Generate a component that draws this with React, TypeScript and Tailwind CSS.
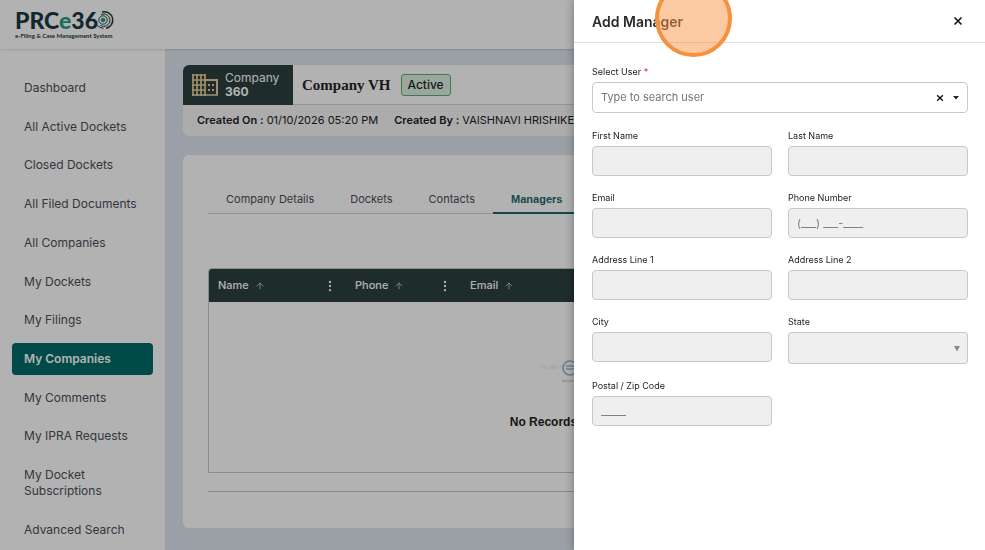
import React, { useState } from 'react';
import { clsx } from 'clsx';
import { ArrowUp, MoreVertical } from 'lucide-react';

const NAV_ITEMS = [
  'Dashboard',
  'All Active Dockets',
  'Closed Dockets',
  'All Filed Documents',
  'All Companies',
  'My Dockets',
  'My Filings',
  'My Companies',
  'My Comments',
  'My IPRA Requests',
  'My Docket Subscriptions',
  'Advanced Search',
];

const TABS = ['Company Details', 'Dockets', 'Contacts', 'Managers'];

function Logo() {
  return (
    <svg width="104" height="48" viewBox="0 0 104 48" role="img" aria-label="PRCe360">
      <text x="0" y="28" fontFamily="Lato, sans-serif" fontWeight="900" fontSize="23" fill="#1c3a42">
        PRC<tspan fill="#2a9d83">e</tspan>36
      </text>
      <g fill="none" stroke="#1c3a42">
        <path d="M87 11A8.400 8.400 0 1 1 91 27.300" strokeWidth="1.500" />
        <path d="M86 13.600A6.200 6.200 0 1 1 85.500 24.500" strokeWidth="1" />
        <circle cx="88" cy="19" r="4.200" strokeWidth="0.900" />
        <path d="M82.500 24.500A8.400 8.400 0 0 0 88.500 27.300" strokeWidth="1" />
      </g>
      <circle cx="88" cy="19" r="2.300" fill="#2a9d83" />
      <text x="0" y="37" fontFamily="Lato, sans-serif" fontWeight="700" fontSize="6" fill="#1c3a42">
        e-Filing &amp; Case Management System
      </text>
    </svg>
  );
}

function BuildingIcon() {
  return (
    <svg width="28" height="24" viewBox="0 0 28 24" fill="none" stroke="#e6cd98" strokeWidth="2" aria-hidden="true">
      <path d="M2 1v22M6 1v22M10 1v22M14 1v22M1 2h14M1 7h14M1 12h14M1 17h14M1 22h26" strokeWidth="1.700" />
      <path d="M14 7h12v15" />
      <path d="M17 12h2M21 12h2M17 17h2M21 17h2" />
    </svg>
  );
}

function EmptyIllustration() {
  return (
    <svg width="72" height="28" viewBox="0 0 72 28" fill="none" aria-hidden="true">
      <path d="M2 11h5M10 11h4M16 9v5M20 11h6" stroke="#f3f4f5" strokeWidth="4" />
      <circle cx="31" cy="12" r="7" stroke="#9fb0c4" strokeWidth="1.500" />
      <path d="M27 10h8M27 13h8" stroke="#b8cbe0" strokeWidth="2" />
      <path d="M23 25h34" stroke="#b5bfcb" strokeWidth="1" />
    </svg>
  );
}

function Sidebar() {
  return (
    <nav className="flex w-[165px] shrink-0 flex-col justify-between bg-white px-3 pt-[23px] pb-1">
      {NAV_ITEMS.map((item) => (
        <a
          key={item}
          href="#"
          className={clsx(
            'rounded px-3 py-2 text-[12px] leading-4',
            item === 'My Companies' ? 'bg-[#006b68] font-semibold text-white' : 'text-[#4b4f58]'
          )}
        >
          {item}
        </a>
      ))}
    </nav>
  );
}

function CompanyCard() {
  return (
    <section className="overflow-hidden rounded-md bg-white">
      <div className="flex h-10 items-center border-b border-[#d5d8dc]">
        <div className="flex h-10 w-[110px] items-center gap-1.5 bg-[#2c4040] pl-2 text-[12px] leading-[14px] text-white">
          <BuildingIcon />
          <div>
            <div>Company</div>
            <div className="font-bold">360</div>
          </div>
        </div>
        <h1 className="ml-[9px] font-['Liberation_Serif',serif] text-[15px] leading-6 font-bold text-[#242424]">Company VH</h1>
        <span className="ml-[10px] rounded-[3px] border border-[#5fae6b] bg-[#dff0e2] px-1.5 text-[12px] leading-5 font-medium text-[#1c2b20]">
          Active
        </span>
      </div>
      <div className="flex h-[31px] items-center gap-4 bg-[#f6f7f8] pl-[14px] text-[11px] whitespace-nowrap text-[#222]">
        <p><b className="font-semibold">Created On :</b> 01/10/2026 05:20 PM</p>
        <p><b className="font-semibold">Created By :</b> VAISHNAVI HRISHIKESH</p>
      </div>
    </section>
  );
}

function HeaderCell({ title, className }: { title: string; className?: string }) {
  return (
    <th className={clsx('px-[9px] text-left font-medium', className)}>
      <div className="flex items-center">
        <span>{title}</span>
        <ArrowUp size={10} className="ml-1.5 text-[#c4cccc]" />
        <button type="button" aria-label={`${title} column menu`} className="ml-auto">
          <MoreVertical size={14} />
        </button>
      </div>
    </th>
  );
}

function ManagersCard() {
  return (
    <section className="rounded-md bg-white px-[25px] pt-8 pb-9">
      <div role="tablist" className="flex border-b border-[#cfd4d6] text-[11px] leading-4">
        {TABS.map((tab) => (
          <button
            key={tab}
            type="button"
            role="tab"
            aria-selected={tab === 'Managers'}
            className={clsx(
              '-mb-px border-b-2 px-[18px] pt-1 pb-[5px]',
              tab === 'Managers'
                ? "border-[#1c6668] font-['Liberation_Sans',sans-serif] font-bold text-[#1c6668]"
                : 'border-transparent text-[#4b4f58]'
            )}
          >
            {tab}
          </button>
        ))}
      </div>

      <div className="mt-[54px] overflow-hidden rounded-t border border-[#c5c9cc]">
        <table className="w-full table-fixed text-[11px]">
          <thead className="bg-[#2c4040] text-white">
            <tr className="h-[33px]">
              <HeaderCell title="Name" className="w-[137px]" />
              <HeaderCell title="Phone" className="w-[115px]" />
              <HeaderCell title="Email" />
            </tr>
          </thead>
          <tbody>
            <tr>
              <td colSpan={3} className="h-[170px] pt-3">
                <div className="flex flex-col items-center gap-[30px]">
                  <EmptyIllustration />
                  <p className="font-['Liberation_Sans',sans-serif] text-[12px] leading-4 font-bold text-[#222]">No Records to Display.</p>
                </div>
              </td>
            </tr>
          </tbody>
        </table>
      </div>
      <hr className="mt-[18px] border-[#c5c9cc]" />
    </section>
  );
}

interface FieldProps {
  id: string;
  label: string;
  placeholder?: string;
}

function Field({ id, label, placeholder }: FieldProps) {
  return (
    <div>
      <label htmlFor={id} className="mb-0.5 block text-[9px] leading-4 text-[#222]">{label}</label>
      <input
        id={id}
        disabled
        placeholder={placeholder}
        className="block h-[30px] w-full rounded border border-[#c5cacd] bg-[#efefef] px-2 text-[11px] placeholder:text-[#777]"
      />
    </div>
  );
}

function AddManagerDrawer() {
  const [query, setQuery] = useState('');

  return (
    <aside role="dialog" aria-label="Add Manager" className="fixed inset-y-0 right-0 w-[411px] overflow-y-auto bg-white shadow-[0_0_10px_rgba(0,0,0,0.35)]">
      <header className="flex h-[43px] items-center justify-between border-b border-[#dedede] pr-5 pl-[18px]">
        <h2 className="text-[14px] font-semibold text-[#2b2b2b]">Add Manager</h2>
        <button type="button" aria-label="Close" className="p-0.5 text-[#1a1a1a]">
          <CloseIcon size={10} />
        </button>
      </header>

      {/* click highlight */}
      <div className="pointer-events-none absolute -top-5 left-[81px] size-[77px] rounded-full border-4 border-[#f6913d] bg-[#f9954580]" />

      <form className="pt-[21px] pr-[17px] pl-[18px]">
        <label htmlFor="user" className="mb-0.5 block text-[9px] leading-4 text-[#222]">
          Select User <span className="text-[#e0202f]">*</span>
        </label>
        <div className="flex h-[31px] items-center rounded border border-[#c5cacd] pr-[7px] pl-2">
          <input
            id="user"
            value={query}
            onChange={(e) => setQuery(e.target.value)}
            placeholder="Type to search user"
            className="min-w-0 flex-1 text-[11px] outline-none placeholder:text-[#6f757a]"
          />
          <button type="button" aria-label="Clear" onClick={() => setQuery('')} className="text-[#111]">
            <CloseIcon size={8} />
          </button>
          <button type="button" aria-label="Show users" className="ml-2 text-[#222]">
            <svg width="8" height="4" viewBox="0 0 8 4" fill="currentColor"><path d="M1 0h6L4 3.500z" /></svg>
          </button>
        </div>

        <div className="mt-[15px] grid grid-cols-2 gap-x-4 gap-y-[14px]">
          <Field id="first" label="First Name" />
          <Field id="last" label="Last Name" />
          <Field id="email" label="Email" />
          <Field id="phone" label="Phone Number" placeholder="(___) ___-____" />
          <Field id="address1" label="Address Line 1" />
          <Field id="address2" label="Address Line 2" />
          <Field id="city" label="City" />
          <div>
            <label htmlFor="state" className="mb-0.5 block text-[9px] leading-4 text-[#222]">State</label>
            <div className="relative">
              <select id="state" disabled className="block h-8 w-full appearance-none rounded-[3px] border border-[#c5cacd] bg-[#efefef] px-2 text-[11px]">
                <option></option>
              </select>
              <svg className="absolute top-3.5 right-2" width="6" height="6" viewBox="0 0 6 6" fill="#8a8a8a"><path d="M0 0h6L3 5.500z" /></svg>
            </div>
          </div>
          <Field id="zip" label="Postal / Zip Code" placeholder="_____" />
        </div>
      </form>
    </aside>
  );
}

function CloseIcon({ size }: { size: number }) {
  return (
    <svg width={size} height={size} viewBox="0 0 10 10" stroke="currentColor" strokeWidth="1.700" aria-hidden="true">
      <path d="M1.500 1.500l7 7M8.500 1.500l-7 7" />
    </svg>
  );
}

export default function App() {
  return (
    <div className="flex min-h-screen flex-col bg-[#dfe6f0] font-[Inter,sans-serif]">
      <header className="z-10 flex h-[49px] items-center bg-white pl-[15px] shadow">
        <Logo />
      </header>
      <div className="flex flex-1">
        <Sidebar />
        <main className="flex min-w-0 flex-1 flex-col gap-[19px] px-[18px] pt-4 pb-5">
          <CompanyCard />
          <ManagersCard />
        </main>
      </div>
      <div className="fixed inset-0 z-20 bg-black/30">
        <AddManagerDrawer />
      </div>
    </div>
  );
}
